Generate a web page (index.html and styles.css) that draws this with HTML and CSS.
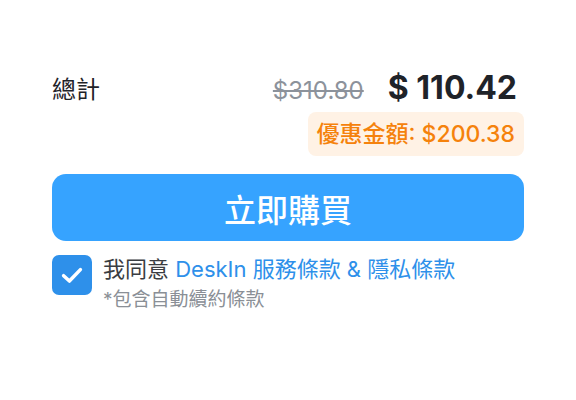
FILE: index.html
```html
<!DOCTYPE html>
<html lang="zh-Hant">
<head>
<meta charset="utf-8">
<link rel="stylesheet" href="styles.css">
</head>
<body>
<div class="panel">
  <div class="total-row">
    <span class="total-label">總計</span>
    <div class="prices">
      <span class="old-price">$310.80</span>
      <span class="new-price">$ 110.42</span>
    </div>
  </div>
  <div class="badge-row">
    <span class="badge">優惠金額: $200.38</span>
  </div>
  <button class="buy-btn">立即購買</button>
  <div class="agree">
    <span class="checkbox">
      <svg width="28" height="28" viewBox="0 0 24 24"><path d="M4.8 12.6 L9.8 17.2 L19.2 7.4" fill="none" stroke="#fff" stroke-width="3" stroke-linecap="round" stroke-linejoin="round"/></svg>
    </span>
    <div class="agree-text">
      <div class="agree-main">我同意 <span class="link">DeskIn 服務條款 &amp; 隱私條款</span></div>
      <div class="agree-sub">*包含自動續約條款</div>
    </div>
  </div>
</div>
</body>
</html>
```
FILE: styles.css
```css
* { box-sizing: border-box; }
body {
  margin: 0;
  background: #fff;
  font-family: "Inter", "Noto Sans CJK TC", sans-serif;
  color: #1f2329;
}
.panel {
  padding: 68px 52px 0 52px;
}
.total-row {
  display: flex;
  justify-content: space-between;
  align-items: center;
  height: 40px;
}
.total-label {
  font-size: 24px;
  line-height: 34px;
  padding-top: 4px;
  color: #1f2329;
}
.prices {
  display: flex;
  align-items: baseline;
  gap: 24px;
  padding-right: 7px;
}
.old-price {
  font-size: 24px;
  color: #8c929b;
  text-decoration: line-through;
  text-decoration-thickness: 2px;
}
.new-price {
  font-size: 32px;
  line-height: 40px;
  font-weight: 700;
  color: #1f2329;
}
.badge-row {
  display: flex;
  justify-content: flex-end;
  margin-top: 4px;
}
.badge {
  background: #fff2e5;
  color: #f5820c;
  font-size: 23px;
  font-weight: 500;
  padding: 7px 9px;
  border-radius: 8px;
  line-height: 30px;
}
.buy-btn {
  display: block;
  width: 100%;
  height: 67px;
  margin-top: 18px;
  border: none;
  border-radius: 14px;
  background: #36a3ff;
  color: #fff;
  font-family: "Inter", "Noto Sans CJK TC", sans-serif;
  font-size: 32px;
  font-weight: 500;
}
.agree {
  display: flex;
  align-items: flex-start;
  margin-top: 14px;
}
.checkbox {
  width: 40px;
  height: 40px;
  border-radius: 7px;
  background: #2e90ea;
  display: flex;
  align-items: center;
  justify-content: center;
  flex: none;
}
.agree-text {
  margin-left: 11px;
  margin-top: -1px;
}
.agree-main {
  font-size: 22px;
  line-height: 30px;
  color: #3a3d42;
}
.link {
  color: #2e90ea;
}
.agree-sub {
  margin-top: 3px;
  font-size: 19px;
  line-height: 26px;
  color: #8a8f96;
}
```
